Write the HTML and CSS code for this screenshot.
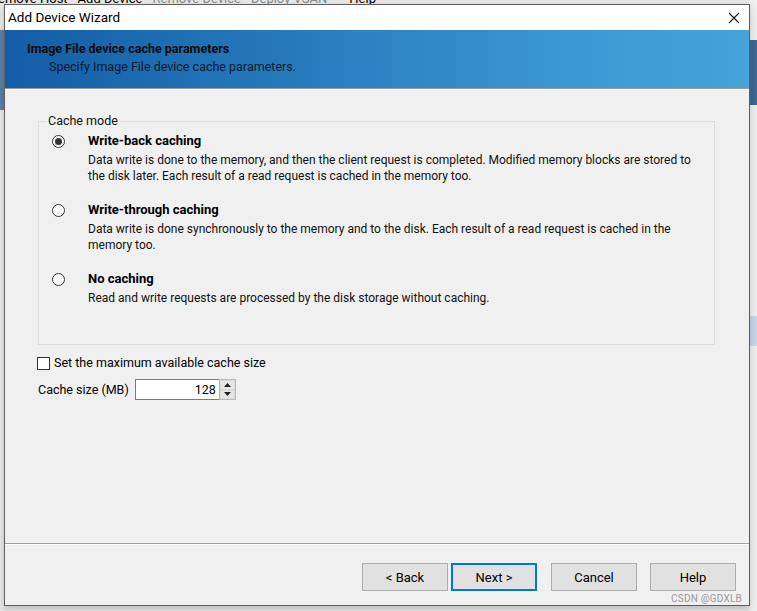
FILE: index.html
```html
<!DOCTYPE html>
<html lang="en">
<head>
    <meta charset="UTF-8">
    <title>Add Device Wizard</title>
    <link rel="stylesheet" href="styles.css">
</head>
<body>
    <div class="desktop">
        <div class="app-menu">
            <span class="menu-item">Remove Host</span>
            <span class="menu-item">Add Device</span>
            <span class="menu-item disabled">Remove Device</span>
            <span class="menu-item disabled">Deploy VSAN</span>
            <span class="menu-item help">Help</span>
        </div>
        <div class="app-left"></div>
        <div class="app-right">
            <div class="band"></div>
            <div class="sel"></div>
        </div>

        <div class="dialog">
            <div class="titlebar">
                <span class="title">Add Device Wizard</span>
                <svg class="close" width="12" height="12" viewBox="0 0 12 12">
                    <path d="M1 1 L11 11 M11 1 L1 11" stroke="#111" stroke-width="1.1" fill="none"/>
                </svg>
            </div>

            <div class="banner">
                <div class="banner-title">Image File device cache parameters</div>
                <div class="banner-sub">Specify Image File device cache parameters.</div>
            </div>

            <div class="content">
                <fieldset class="group">
                    <legend>Cache mode</legend>

                    <div class="option">
                        <span class="radio checked"></span>
                        <div class="option-text">
                            <div class="option-label">Write-back caching</div>
                            <div class="option-desc">Data write is done to the memory, and then the client request is completed. Modified memory blocks are stored to the disk later. Each result of a read request is cached in the memory too.</div>
                        </div>
                    </div>

                    <div class="option">
                        <span class="radio"></span>
                        <div class="option-text">
                            <div class="option-label">Write-through caching</div>
                            <div class="option-desc">Data write is done synchronously to the memory and to the disk. Each result of a read request is cached in the memory too.</div>
                        </div>
                    </div>

                    <div class="option">
                        <span class="radio"></span>
                        <div class="option-text">
                            <div class="option-label">No caching</div>
                            <div class="option-desc">Read and write requests are processed by the disk storage without caching.</div>
                        </div>
                    </div>
                </fieldset>

                <div class="check-row">
                    <span class="checkbox"></span>
                    <span>Set the maximum available cache size</span>
                </div>

                <div class="size-row">
                    <span>Cache size (MB)</span>
                    <div class="spin">
                        <div class="spin-value">128</div>
                        <div class="spin-btns">
                            <div class="spin-btn"><svg width="7" height="4" viewBox="0 0 7 4"><path d="M0 4 L3.5 0 L7 4 Z" fill="#222"/></svg></div>
                            <div class="spin-btn"><svg width="7" height="4" viewBox="0 0 7 4"><path d="M0 0 L3.5 4 L7 0 Z" fill="#222"/></svg></div>
                        </div>
                    </div>
                </div>
            </div>

            <div class="footer">
                <button class="btn">&lt; Back</button>
                <button class="btn default">Next &gt;</button>
                <button class="btn gap">Cancel</button>
                <button class="btn gap">Help</button>
            </div>
        </div>

        <div class="watermark">CSDN @GDXLB</div>
    </div>
</body>
</html>
```

FILE: styles.css
```css
* {
    margin: 0;
    padding: 0;
    box-sizing: border-box;
}

body {
    font-family: Roboto, 'Noto Sans', 'Noto Sans CJK SC', sans-serif;
    font-size: 12px;
    color: #000;
    background: #e8e8e8;
}

.desktop {
    position: relative;
    width: 757px;
    height: 611px;
    overflow: hidden;
    background: #e6e6e6;
}

.app-menu {
    position: absolute;
    top: -9px;
    left: -10px;
    display: flex;
    gap: 10px;
    line-height: 16px;
    white-space: nowrap;
    font-size: 13px;
}

.menu-item.disabled {
    color: #8a8a8a;
}

.menu-item.help {
    margin-left: 12px;
}

.app-left {
    position: absolute;
    left: 0;
    top: 30px;
    width: 4px;
    height: 80px;
    background: #5b7ea6;
}

.app-right {
    position: absolute;
    right: 0;
    top: 0;
    width: 8px;
    height: 611px;
    background: #ededed;
}

.app-right .band {
    margin-top: 40px;
    height: 65px;
    background: #3f6690;
}

.app-right .sel {
    margin-top: 211px;
    height: 30px;
    background: #c9d3e8;
}

.dialog {
    position: absolute;
    left: 4px;
    top: 4px;
    width: 746px;
    height: 602px;
    background: #f0f0f0;
    border: 1px solid #5e5e5e;
    box-shadow: 0 3px 6px rgba(0, 0, 0, 0.18);
    display: flex;
    flex-direction: column;
}

.titlebar {
    height: 25px;
    background: #fff;
    display: flex;
    align-items: center;
    justify-content: space-between;
    padding: 0 9px 0 3px;
}

.title {
    font-size: 13.5px;
    line-height: 25px;
}

.banner {
    height: 59px;
    background: linear-gradient(90deg, #135da6 0%, #2a7fc0 45%, #3b97d2 75%, #45a3d8 100%);
    border-bottom: 1px solid #9a9a9a;
    padding: 11px 0 0 22px;
}

.banner-title {
    font-weight: bold;
    font-size: 12.5px;
    line-height: 16px;
    color: #0a0a0a;
}

.banner-sub {
    padding-left: 22px;
    margin-top: 2px;
    font-size: 12.5px;
    line-height: 16px;
    color: #0a1a2a;
}

.content {
    flex: 1;
    padding: 23px 34px 0 33px;
    border-top: 1px solid #fff;
}

.group {
    border: 1px solid #dcdcdc;
    padding: 3px 0 38px 8px;
}

.group legend {
    padding: 0 1px;
    font-size: 12.5px;
    line-height: 16px;
    color: #111;
}

.option {
    display: flex;
    align-items: flex-start;
    margin-bottom: 17px;
}

.option:last-of-type {
    margin-bottom: 0;
}

.radio {
    width: 13px;
    height: 13px;
    border: 1px solid #333;
    border-radius: 50%;
    background: #fff;
    margin: 3px 23px 0 5px;
    display: flex;
    align-items: center;
    justify-content: center;
    flex-shrink: 0;
}

.radio.checked::after {
    content: '';
    width: 7px;
    height: 7px;
    border-radius: 50%;
    background: #333;
}

.option-label {
    font-weight: bold;
    font-size: 13px;
    line-height: 18px;
}

.option-desc {
    margin-top: 2px;
    line-height: 16px;
    padding-right: 12px;
    color: #111;
}

.check-row {
    display: flex;
    align-items: center;
    gap: 4px;
    margin-top: 10px;
    margin-left: -1px;
    font-size: 12.5px;
    line-height: 16px;
}

.checkbox {
    width: 13px;
    height: 13px;
    border: 1px solid #333;
    background: #fff;
}

.size-row {
    display: flex;
    align-items: center;
    gap: 6px;
    margin-top: 8px;
    font-size: 12.5px;
}

.spin {
    display: flex;
    height: 21px;
}

.spin-value {
    width: 84px;
    border: 1px solid #7a7a7a;
    border-right: none;
    background: #fff;
    text-align: right;
    padding-right: 3px;
    line-height: 19px;
}

.spin-btns {
    width: 17px;
    border: 1px solid #b9b9b9;
    display: flex;
    flex-direction: column;
    background: #f0f0f0;
}

.spin-btn {
    flex: 1;
    display: flex;
    align-items: center;
    justify-content: center;
    border: 1px solid #dadada;
    background: #e6e6e6;
}

.footer {
    height: 62px;
    border-top: 1px solid #a0a0a0;
    box-shadow: inset 0 1px 0 #fff;
    display: flex;
    justify-content: flex-end;
    align-items: flex-start;
    padding: 19px 13px 0 0;
    gap: 3px;
}

.btn {
    width: 86px;
    height: 28px;
    font-family: inherit;
    font-size: 13px;
    background: #e1e1e1;
    border: 1px solid #adadad;
    color: #000;
}

.btn.default {
    border: 2px solid #0078d7;
}

.btn.gap {
    margin-left: 11px;
}

.btn.gap:last-child {
    margin-left: 10px;
}

.watermark {
    position: absolute;
    right: 15px;
    bottom: 7px;
    font-size: 10px;
    color: #9a9a9a;
    letter-spacing: 0.2px;
}
```
